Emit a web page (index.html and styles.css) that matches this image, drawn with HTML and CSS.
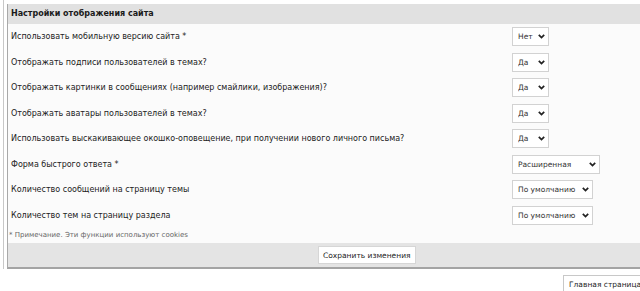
FILE: index.html
```html
<!DOCTYPE html>
<html lang="ru">
<head>
    <meta charset="UTF-8">
    <title>Настройки отображения сайта</title>
    <link rel="stylesheet" href="styles.css">
</head>
<body>
    <div class="outer">
        <form class="settingsBox">
            <div class="boxHeader">Настройки отображения сайта</div>
            <div class="settingRow">
                <span class="label">Использовать мобильную версию сайта *</span>
                <span class="pick pickShort">
                    <select><option>Нет</option><option>Да</option></select>
                    <svg class="chev" width="7" height="5" viewBox="0 0 7 5"><path d="M0.8 0.8 L3.5 3.6 L6.2 0.8" fill="none" stroke="#222" stroke-width="1.7"/></svg>
                </span>
            </div>
            <div class="settingRow">
                <span class="label">Отображать подписи пользователей в темах?</span>
                <span class="pick pickShort">
                    <select><option>Да</option><option>Нет</option></select>
                    <svg class="chev" width="7" height="5" viewBox="0 0 7 5"><path d="M0.8 0.8 L3.5 3.6 L6.2 0.8" fill="none" stroke="#222" stroke-width="1.7"/></svg>
                </span>
            </div>
            <div class="settingRow">
                <span class="label">Отображать картинки в сообщениях (например смайлики, изображения)?</span>
                <span class="pick pickShort">
                    <select><option>Да</option><option>Нет</option></select>
                    <svg class="chev" width="7" height="5" viewBox="0 0 7 5"><path d="M0.8 0.8 L3.5 3.6 L6.2 0.8" fill="none" stroke="#222" stroke-width="1.7"/></svg>
                </span>
            </div>
            <div class="settingRow">
                <span class="label">Отображать аватары пользователей в темах?</span>
                <span class="pick pickShort">
                    <select><option>Да</option><option>Нет</option></select>
                    <svg class="chev" width="7" height="5" viewBox="0 0 7 5"><path d="M0.8 0.8 L3.5 3.6 L6.2 0.8" fill="none" stroke="#222" stroke-width="1.7"/></svg>
                </span>
            </div>
            <div class="settingRow">
                <span class="label">Использовать выскакивающее окошко-оповещение, при получении нового личного письма?</span>
                <span class="pick pickShort">
                    <select><option>Да</option><option>Нет</option></select>
                    <svg class="chev" width="7" height="5" viewBox="0 0 7 5"><path d="M0.8 0.8 L3.5 3.6 L6.2 0.8" fill="none" stroke="#222" stroke-width="1.7"/></svg>
                </span>
            </div>
            <div class="settingRow">
                <span class="label">Форма быстрого ответа *</span>
                <span class="pick pickWide">
                    <select><option>Расширенная</option><option>Простая</option></select>
                    <svg class="chev" width="7" height="5" viewBox="0 0 7 5"><path d="M0.8 0.8 L3.5 3.6 L6.2 0.8" fill="none" stroke="#222" stroke-width="1.7"/></svg>
                </span>
            </div>
            <div class="settingRow">
                <span class="label">Количество сообщений на страницу темы</span>
                <span class="pick pickMid">
                    <select><option>По умолчанию</option></select>
                    <svg class="chev" width="7" height="5" viewBox="0 0 7 5"><path d="M0.8 0.8 L3.5 3.6 L6.2 0.8" fill="none" stroke="#222" stroke-width="1.7"/></svg>
                </span>
            </div>
            <div class="settingRow">
                <span class="label">Количество тем на страницу раздела</span>
                <span class="pick pickMid">
                    <select><option>По умолчанию</option></select>
                    <svg class="chev" width="7" height="5" viewBox="0 0 7 5"><path d="M0.8 0.8 L3.5 3.6 L6.2 0.8" fill="none" stroke="#222" stroke-width="1.7"/></svg>
                </span>
            </div>
            <div class="note">* Примечание. Эти функции используют cookies</div>
            <div class="boxFooter">
                <button type="button" class="saveBtn">Сохранить изменения</button>
            </div>
        </form>
    </div>
    <div class="bottomNav">
        <button type="button" class="navBtn">Главная страница</button>
    </div>
</body>
</html>
```

FILE: styles.css
```css
/* settings page */

body {
    margin: 0;
    background: #fff;
    font-family: "DejaVu Sans", Verdana, sans-serif;
    font-size: 8px;
    color: #222;
    overflow: hidden;
}

.outer {
    margin-left: 3px;
    padding-left: 3px;
    padding-top: 4px;
    border-left: 1px solid #c8c8c8;
    width: 720px;
}

.settingsBox {
    margin: 0;
    background: #fbfbfb;
    border-left: 1px solid #a9a9a9;
    border-bottom: 2px solid #a4a4a4;
}

.boxHeader {
    height: 20px;
    line-height: 20px;
    padding-left: 3px;
    background: #e1e1e1;
    font-weight: bold;
    color: #1a1a1a;
}

.settingRow {
    display: flex;
    align-items: center;
    height: 25.5px;
    padding-left: 3px;
}

.label {
    width: 501px;
    flex: none;
}

.pick {
    position: relative;
    display: inline-flex;
}

.pick select {
    appearance: none;
    -webkit-appearance: none;
    height: 19px;
    margin: 0;
    padding: 0 0 0 5px;
    border: 1px solid #d2d2d2;
    border-radius: 0;
    background: #fff;
    font-family: "DejaVu Sans", Verdana, sans-serif;
    font-size: 7.5px;
    color: #333;
}

.pickShort select { width: 37px; }
.pickWide select { width: 88px; }
.pickMid select { width: 81px; }

.chev {
    position: absolute;
    right: 4px;
    top: 7px;
    pointer-events: none;
}

.note {
    height: 15px;
    line-height: 15px;
    padding-left: 1px;
    font-size: 7px;
    color: #666;
}

.boxFooter {
    height: 24px;
    background: #e4e4e4;
    display: flex;
    align-items: center;
    padding-left: 310px;
}

.saveBtn {
    height: 18px;
    padding: 0 4px;
    background: #fff;
    border: 1px solid #d6d6d6;
    font-family: "DejaVu Sans", Verdana, sans-serif;
    font-size: 7.5px;
    color: #222;
}

.bottomNav {
    display: flex;
    padding-top: 6px;
    padding-left: 563px;
}

.navBtn {
    height: 18px;
    padding: 0 5px;
    background: #fff;
    border: 1px solid #c8c8c8;
    font-family: "DejaVu Sans", Verdana, sans-serif;
    font-size: 7.5px;
    color: #222;
    white-space: nowrap;
}
```
